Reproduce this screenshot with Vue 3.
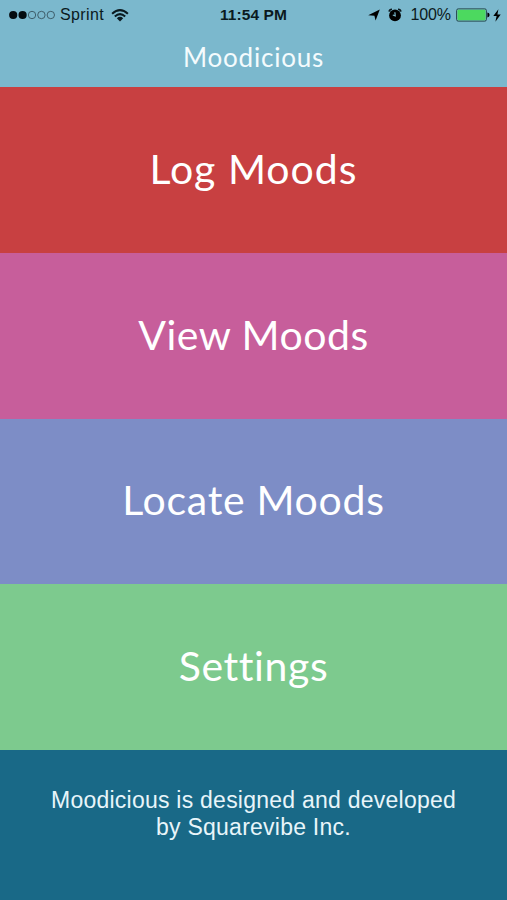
<template>
  <div class="app">
    <header class="header">
      <div class="status-bar">
        <div class="status-left">
          <svg class="signal" width="47" height="12" viewBox="0 0 47 12">
            <circle
              v-for="n in 5"
              :key="n"
              :cx="4.2 + (n - 1) * 9.4"
              cy="6"
              :r="n <= signal ? 4.1 : 3.7"
              :class="n <= signal ? 'dot-on' : 'dot-off'"
            />
          </svg>
          <span class="carrier">Sprint</span>
          <svg class="wifi" width="18" height="13" viewBox="0 0 18 13">
            <path d="M1.1 4.7 Q9 -2.4 16.9 4.7" />
            <path d="M3.8 7.5 Q9 2.8 14.2 7.5" />
            <path class="wifi-base" d="M5.8 9.2 Q9 6.4 12.2 9.2 L9 12.5 Z" />
          </svg>
        </div>
        <div class="time">11:54 PM</div>
        <div class="status-right">
          <svg class="location" width="12" height="12" viewBox="0 0 12 12">
            <path d="M11.8 0.4 L7.6 11.6 L6.4 6.8 L0.2 6.2 Z" />
          </svg>
          <svg class="alarm" width="14" height="14" viewBox="0 0 14 14">
            <circle cx="7" cy="7.4" r="5.9" />
            <path class="bells" d="M1.1 3.7 Q1.4 1.3 4 1.2 M12.9 3.7 Q12.6 1.3 10 1.2" />
            <path class="hands" d="M6.9 4.2 L7.2 7.8 L4.8 7" />
          </svg>
          <span class="percent">100%</span>
          <svg class="battery" width="34" height="14" viewBox="0 0 34 14">
            <rect class="shell" x="0.6" y="0.9" width="29.8" height="12.2" rx="1.6" />
            <rect class="charge" x="1.5" y="1.8" width="28" height="10.4" rx="0.8" />
            <path d="M31.4 4.6 Q33.6 5 33.6 7 Q33.6 9 31.4 9.4 Z" />
          </svg>
          <svg class="bolt" width="8" height="13" viewBox="0 0 8 13">
            <path d="M5.4 0.3 L0.3 7.1 L3.6 7.1 L2.4 12.7 L7.7 5.4 L4.4 5.4 Z" />
          </svg>
        </div>
      </div>
      <h1>Moodicious</h1>
    </header>

    <nav class="menu">
      <button
        v-for="item in menuItems"
        :key="item.name"
        type="button"
        :class="['menu-item', item.name]"
      >
        <span>{{ item.label }}</span>
      </button>
    </nav>

    <footer class="footer">
      <p>Moodicious is designed and developed<br />by Squarevibe Inc.</p>
    </footer>
  </div>
</template>

<script setup>
const signal = 2;

const menuItems = [
  { name: "log", label: "Log Moods" },
  { name: "view", label: "View Moods" },
  { name: "locate", label: "Locate Moods" },
  { name: "settings", label: "Settings" },
];
</script>

<style>
body {
  margin: 0;
}
</style>

<style scoped>
.app {
  display: flex;
  flex-direction: column;
  height: 900px;
  overflow: hidden;
  background: #196987;
  font-family: Lato, sans-serif;
}

.header {
  flex: none;
  box-sizing: border-box;
  height: 87px;
  background: #7bb8cd;
}

.status-bar {
  display: grid;
  grid-template-columns: 1fr auto 1fr;
  align-items: center;
  height: 30px;
  padding: 0 6px 0 9px;
  font-family: "Liberation Sans", Arial, sans-serif;
  font-size: 16px;
  line-height: 30px;
  color: #0b1a20;
}

.status-left,
.status-right {
  display: flex;
  align-items: center;
}

.status-right {
  justify-content: flex-end;
}

.dot-on {
  fill: #050c10;
}

.dot-off {
  fill: none;
  stroke: #2e4852;
  stroke-width: 0.8;
}

.carrier {
  margin-left: 4px;
  letter-spacing: 0.4px;
}

.wifi {
  margin-left: 7px;
  fill: none;
  stroke: #0b1a20;
  stroke-width: 2;
}

.wifi-base {
  fill: #0b1a20;
  stroke: none;
}

.time {
  margin-right: 3px;
  font-weight: 700;
  font-size: 15.5px;
  letter-spacing: 0.1px;
}

.location {
  margin-right: 8px;
}

.alarm {
  margin-right: 8px;
}

.bells {
  fill: none;
  stroke: #0b1a20;
  stroke-width: 1.6;
}

.hands {
  fill: none;
  stroke: #7bb8cd;
  stroke-width: 1.2;
}

.percent {
  letter-spacing: -0.1px;
}

.battery {
  margin-left: 5px;
}

.shell {
  fill: none;
  stroke: #24454a;
  stroke-width: 1;
}

.charge {
  fill: #4cd95f;
}

.bolt {
  margin-left: 3px;
}

h1 {
  margin: 0;
  font-size: 26px;
  font-weight: 400;
  line-height: 54px;
  letter-spacing: 0.8px;
  text-align: center;
  color: #f4fbfd;
}

.menu {
  display: flex;
  flex-direction: column;
  flex: none;
  height: 663px;
}

.menu-item {
  flex: 1;
  padding: 0 0 2px;
  border: 0;
  font-family: inherit;
  font-size: 41px;
  line-height: 50px;
  letter-spacing: 1px;
  color: #fff;
}

.menu-item span {
  display: block;
}

.log {
  background: #c84041;
}

.view {
  background: #c75e9b;
  letter-spacing: 0.5px;
}

.locate {
  background: #7d8dc6;
  letter-spacing: 0.7px;
}

.settings {
  background: #7dca8e;
  letter-spacing: 0.6px;
}

.footer {
  flex: 1;
  padding-top: 37px;
}

.footer p {
  margin: 0;
  font-family: "Liberation Sans", Arial, sans-serif;
  font-size: 23px;
  line-height: 27px;
  letter-spacing: 0.24px;
  text-align: center;
  color: #e8f5fa;
}
</style>
